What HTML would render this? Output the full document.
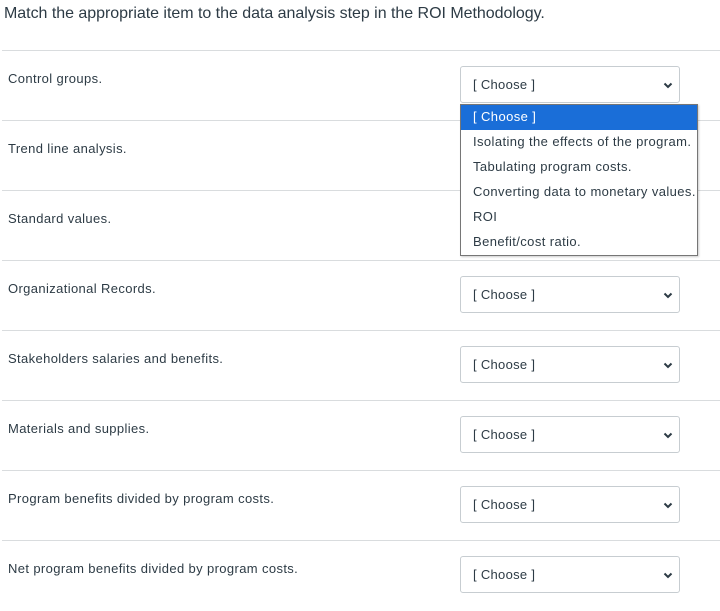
<!DOCTYPE html>
<html><head><style>
body{margin:0;width:720px;height:605px;background:#fff;font-family:"Liberation Sans",sans-serif;color:#2d3b45;position:relative;overflow:hidden}
.t{position:absolute;left:4px;top:5px;font-size:16px;letter-spacing:-0.03px}
.row{position:absolute;left:2px;width:718px;height:70px;border-top:1px solid #d9dcde}
.lab{position:absolute;left:6px;top:20px;font-size:13px;letter-spacing:0.37px}
.sel{position:absolute;left:458px;top:15px;width:218px;height:35px;border:1px solid #c7cdd1;border-radius:3px;font-size:13px;letter-spacing:0.3px}
.sel span{position:absolute;left:12px;top:10px}
.sel svg{position:absolute;right:6px;top:15px}
.dd{position:absolute;left:460px;top:104px;width:236px;height:150px;border:1px solid #767676;background:#fff;font-size:13px;letter-spacing:0.4px;box-shadow:1px 1px 2px rgba(0,0,0,.2)}
.dd div{height:25px;line-height:24px;padding-left:12px;white-space:nowrap}
.dd .h{background:#1a6ed8;color:#fff}
</style></head><body>
<div class="t">Match the appropriate item to the data analysis step in the ROI Methodology.</div>
<div class="row" style="top:50px"><div class="lab">Control groups.</div><div class="sel"><span>[ Choose ]</span><svg width="10" height="7" viewBox="0 0 10 7"><path d="M1.5 1.5L5 5L8.5 1.5" stroke="#2d3b45" stroke-width="2" fill="none"/></svg></div></div>
<div class="row" style="top:120px"><div class="lab">Trend line analysis.</div></div>
<div class="row" style="top:190px"><div class="lab">Standard values.</div></div>
<div class="row" style="top:260px"><div class="lab">Organizational Records.</div><div class="sel"><span>[ Choose ]</span><svg width="10" height="7" viewBox="0 0 10 7"><path d="M1.5 1.5L5 5L8.5 1.5" stroke="#2d3b45" stroke-width="2" fill="none"/></svg></div></div>
<div class="row" style="top:330px"><div class="lab">Stakeholders salaries and benefits.</div><div class="sel"><span>[ Choose ]</span><svg width="10" height="7" viewBox="0 0 10 7"><path d="M1.5 1.5L5 5L8.5 1.5" stroke="#2d3b45" stroke-width="2" fill="none"/></svg></div></div>
<div class="row" style="top:400px"><div class="lab">Materials and supplies.</div><div class="sel"><span>[ Choose ]</span><svg width="10" height="7" viewBox="0 0 10 7"><path d="M1.5 1.5L5 5L8.5 1.5" stroke="#2d3b45" stroke-width="2" fill="none"/></svg></div></div>
<div class="row" style="top:470px"><div class="lab">Program benefits divided by program costs.</div><div class="sel"><span>[ Choose ]</span><svg width="10" height="7" viewBox="0 0 10 7"><path d="M1.5 1.5L5 5L8.5 1.5" stroke="#2d3b45" stroke-width="2" fill="none"/></svg></div></div>
<div class="row" style="top:540px"><div class="lab">Net program benefits divided by program costs.</div><div class="sel"><span>[ Choose ]</span><svg width="10" height="7" viewBox="0 0 10 7"><path d="M1.5 1.5L5 5L8.5 1.5" stroke="#2d3b45" stroke-width="2" fill="none"/></svg></div></div>
<div class="dd">
<div class="h">[ Choose ]</div>
<div>Isolating the effects of the program.</div>
<div>Tabulating program costs.</div>
<div>Converting data to monetary values.</div>
<div>ROI</div>
<div>Benefit/cost ratio.</div>
</div>
</body></html>
